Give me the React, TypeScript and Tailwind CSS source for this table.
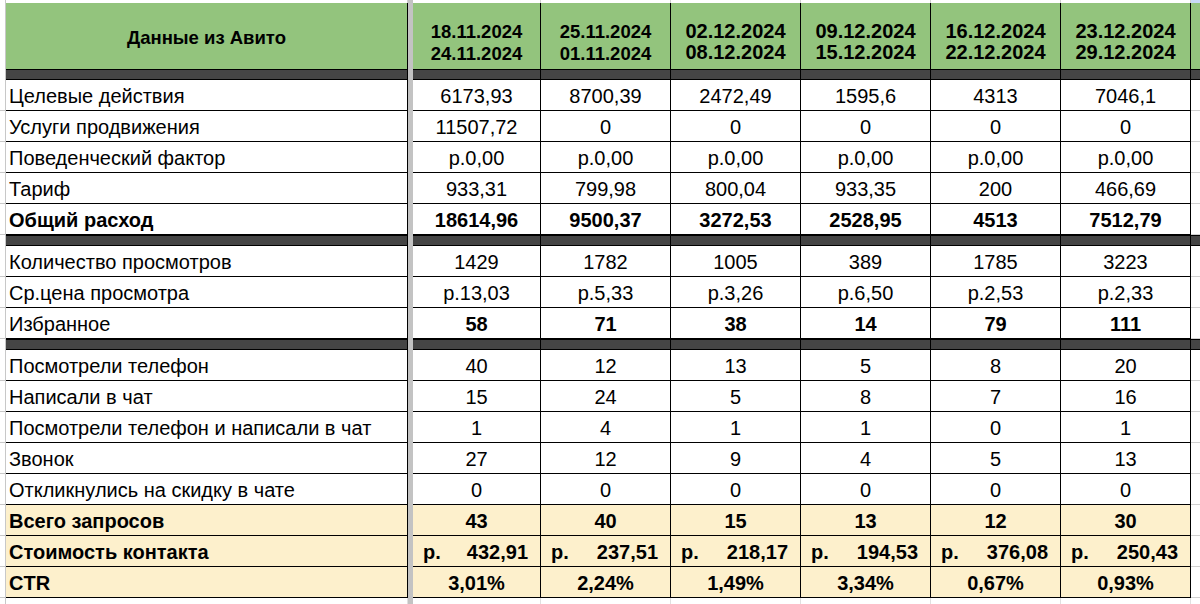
import React from 'react'

type Row = {
    label: string
    values: string[]
    boldLabel?: boolean
    boldValues?: boolean
    beige?: boolean
    money?: boolean
}

const COLS = 'grid grid-cols-[6px_402px_5px_128px_130px_130px_130px_130px_130px_9px]'

const dates: [string, string, boolean][] = [
    ['18.11.2024', '24.11.2024', false],
    ['25.11.2024', '01.11.2024', false],
    ['02.12.2024', '08.12.2024', true],
    ['09.12.2024', '15.12.2024', true],
    ['16.12.2024', '22.12.2024', true],
    ['23.12.2024', '29.12.2024', true],
]

const groups: Row[][] = [
    [
        { label: 'Целевые действия', values: ['6173,93', '8700,39', '2472,49', '1595,6', '4313', '7046,1'] },
        { label: 'Услуги продвижения', values: ['11507,72', '0', '0', '0', '0', '0'] },
        { label: 'Поведенческий фактор', values: ['р.0,00', 'р.0,00', 'р.0,00', 'р.0,00', 'р.0,00', 'р.0,00'] },
        { label: 'Тариф', values: ['933,31', '799,98', '800,04', '933,35', '200', '466,69'] },
        { label: 'Общий расход', values: ['18614,96', '9500,37', '3272,53', '2528,95', '4513', '7512,79'], boldLabel: true, boldValues: true },
    ],
    [
        { label: 'Количество просмотров', values: ['1429', '1782', '1005', '389', '1785', '3223'] },
        { label: 'Ср.цена просмотра', values: ['р.13,03', 'р.5,33', 'р.3,26', 'р.6,50', 'р.2,53', 'р.2,33'] },
        { label: 'Избранное', values: ['58', '71', '38', '14', '79', '111'], boldValues: true },
    ],
    [
        { label: 'Посмотрели телефон', values: ['40', '12', '13', '5', '8', '20'] },
        { label: 'Написали в чат', values: ['15', '24', '5', '8', '7', '16'] },
        { label: 'Посмотрели телефон и написали в чат', values: ['1', '4', '1', '1', '0', '1'] },
        { label: 'Звонок', values: ['27', '12', '9', '4', '5', '13'] },
        { label: 'Откликнулись на скидку в чате', values: ['0', '0', '0', '0', '0', '0'] },
        { label: 'Всего запросов', values: ['43', '40', '15', '13', '12', '30'], boldLabel: true, boldValues: true, beige: true },
        { label: 'Стоимость контакта', values: ['432,91', '237,51', '218,17', '194,53', '376,08', '250,43'], boldLabel: true, boldValues: true, beige: true, money: true },
        { label: 'CTR', values: ['3,01%', '2,24%', '1,49%', '3,34%', '0,67%', '0,93%'], boldLabel: true, boldValues: true, beige: true },
    ],
]

const Frozen = () => <div className="bg-[#c3c3c3]" />

const DarkBar = () => (
    <div className={COLS}>
        <div className="border-r border-[#c8c8c8]" />
        <div className="h-[11px] bg-[#454545] border-y border-r border-black" />
        <Frozen />
        {dates.map((_, i) => (
            <div key={i} className="h-[11px] bg-[#454545] border-y border-r border-black" />
        ))}
        <div className="h-[11px] bg-[#454545] border-y border-black" />
    </div>
)

const DataRow = ({ row }: { row: Row }) => {
    const bg = row.beige ? 'bg-[#fdf0cc]' : 'bg-white'
    return (
        <div className={`${COLS} h-[31px] text-[20px] text-black`}>
            <div className="border-r border-b border-[#c8c8c8]" />
            <div className={`${bg} border-r border-b border-black pl-[3px] pt-[2px] leading-[28px] whitespace-nowrap ${row.boldLabel ? 'font-bold' : ''}`}>
                {row.label}
            </div>
            <Frozen />
            {row.values.map((v, i) => (
                <div
                    key={i}
                    className={`${bg} border-r border-b border-black pt-[2px] leading-[28px] whitespace-nowrap ${row.boldValues ? 'font-bold' : ''} ${row.money ? 'flex justify-between pl-[10px] pr-[12px]' : 'text-center'}`}
                >
                    {row.money ? (
                        <>
                            <span>р.</span>
                            <span>{v}</span>
                        </>
                    ) : (
                        v
                    )}
                </div>
            ))}
            <div className="border-b border-[#d0d0d0]" />
        </div>
    )
}

export default function App() {
    return (
        <div className="w-[1200px] h-[604px] bg-white overflow-hidden font-['Liberation_Sans',Arial,sans-serif]">
            <div className={`${COLS} h-[3px]`}>
                <div className="border-r border-[#c8c8c8]" />
                <div className="border-r border-[#d0d0d0]" />
                <Frozen />
                {dates.map((_, i) => (
                    <div key={i} className="border-r border-[#d0d0d0]" />
                ))}
                <div className="bg-[#c9daf8]" />
            </div>
            <div className={`${COLS} h-[66px]`}>
                <div className="border-r border-[#c8c8c8]" />
                <div className="bg-[#93c47d] border-r border-black flex items-center justify-center pt-[3px] text-[18.5px] font-bold text-black">
                    Данные из Авито
                </div>
                <Frozen />
                {dates.map(([a, b, big], i) => (
                    <div
                        key={i}
                        className={`bg-[#93c47d] border-r border-black flex flex-col items-center justify-end font-bold text-black ${big ? 'text-[20px] leading-[21px] pb-[6px]' : 'text-[18.5px] leading-[21.5px] pb-[5px]'}`}
                    >
                        <span>{a}</span>
                        <span>{b}</span>
                    </div>
                ))}
                <div className="bg-[#93c47d]" />
            </div>
            {groups.map((g, gi) => (
                <React.Fragment key={gi}>
                    <DarkBar />
                    {g.map((r, ri) => (
                        <DataRow key={ri} row={r} />
                    ))}
                </React.Fragment>
            ))}
            <div className={`${COLS} h-[6px]`}>
                <div className="border-r border-[#c8c8c8]" />
                <div className="border-r border-[#e0e0e0]" />
                <Frozen />
                {dates.map((_, i) => (
                    <div key={i} className="border-r border-[#e0e0e0]" />
                ))}
                <div />
            </div>
        </div>
    )
}
